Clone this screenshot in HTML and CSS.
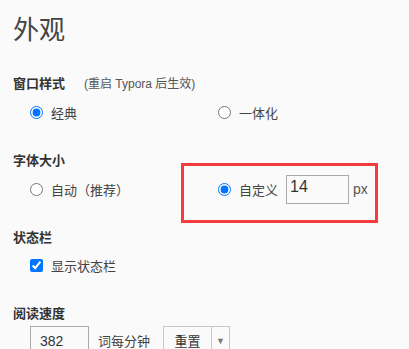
FILE: index.html
```html
<!DOCTYPE html>
<html lang="zh-CN">
<head>
<meta charset="utf-8">
<title>外观</title>
<link rel="stylesheet" href="styles.css">
</head>
<body>
<div class="page">
  <h1 class="title">外观</h1>

  <div class="label label-first">窗口样式<span class="hint">(重启 Typora 后生效)</span></div>
  <div class="options">
    <label class="opt"><input type="radio" name="win" checked><span>经典</span></label>
    <label class="opt"><input type="radio" name="win"><span>一体化</span></label>
  </div>

  <div class="label">字体大小</div>
  <div class="options">
    <label class="opt"><input type="radio" name="fs"><span>自动（推荐）</span></label>
    <div class="opt custom">
      <input type="radio" name="fs" checked><span>自定义</span>
      <input class="num" type="text" value="14"><span class="unit">px</span>
      <div class="highlight"></div>
    </div>
  </div>

  <div class="label">状态栏</div>
  <div class="options single">
    <label class="opt"><input type="checkbox" checked><span>显示状态栏</span></label>
  </div>

  <div class="label">阅读速度</div>
  <div class="speed">
    <input class="num speed-input" type="text" value="382">
    <span class="unit-text">词每分钟</span>
    <div class="split-btn">
      <span class="btn-main">重置</span>
      <span class="btn-drop">▼</span>
    </div>
  </div>
</div>
</body>
</html>
```

FILE: styles.css
```css
html, body {
  margin: 0;
  padding: 0;
  background: #fafafa;
}

body {
  font-family: "Liberation Sans", "Noto Sans CJK SC", sans-serif;
  font-size: 13px;
  color: #333;
  overflow: hidden;
  height: 349px;
}

.page {
  padding-left: 13px;
  width: 396px;
}

.title {
  margin: 0;
  height: 56px;
  line-height: 56px;
  font-size: 26px;
  font-weight: normal;
  color: #444;
  font-family: "Noto Sans CJK SC", sans-serif;
}

.label {
  height: 20px;
  line-height: 20px;
  font-weight: bold;
  margin-top: 26px;
  font-family: "Noto Sans CJK SC", sans-serif;
  color: #333;
}

.label-first {
  margin-top: 17px;
}

.hint {
  font-weight: normal;
  font-size: 12px;
  font-family: "Liberation Sans", "Noto Sans CJK SC", sans-serif;
  color: #555;
  margin-left: 19px;
}

.options {
  display: grid;
  grid-template-columns: 188px 1fr;
  height: 24px;
  margin-top: 7px;
  padding-left: 17px;
}

.options.single {
  margin-top: 6px;
  grid-template-columns: 1fr;
}

.opt {
  display: flex;
  align-items: center;
  height: 24px;
  font-family: "Noto Sans CJK SC", sans-serif;
  color: #444;
}

.opt input[type="radio"],
.opt input[type="checkbox"] {
  margin: 0 8px 0 0;
  width: 13px;
  height: 13px;
  flex: none;
}

.custom {
  position: relative;
}

.num {
  box-sizing: border-box;
  border: 1px solid #aaa;
  background: #fafafa;
  font-family: "Liberation Sans", sans-serif;
  font-size: 15px;
  color: #333;
  outline: none;
}

.custom .num {
  width: 63px;
  height: 29px;
  margin-left: 8px;
  padding: 0 4px 4px 3px;
  font-size: 16px;
}

.unit {
  margin-left: 4px;
  font-family: "Liberation Sans", sans-serif;
  font-size: 14px;
  color: #555;
}

.highlight {
  position: absolute;
  left: -37px;
  top: -14px;
  width: 197px;
  height: 60px;
  box-sizing: border-box;
  border: 3px solid #f53b3b;
  pointer-events: none;
}

.speed {
  display: flex;
  align-items: center;
  margin-top: 3px;
  padding-left: 17px;
  height: 29px;
}

.speed-input {
  width: 59px;
  height: 29px;
  padding: 0 0 0 9px;
  font-size: 14px;
}

.unit-text {
  margin-left: 9px;
  font-family: "Noto Sans CJK SC", sans-serif;
  color: #444;
  font-size: 13px;
}

.split-btn {
  display: flex;
  margin-left: 13px;
  height: 29px;
  box-sizing: border-box;
  border: 1px solid #c8c8c8;
  background: #fafafa;
}

.btn-main {
  width: 47px;
  display: flex;
  align-items: center;
  justify-content: center;
  border-right: 1px solid #c8c8c8;
  font-family: "Noto Sans CJK SC", sans-serif;
  color: #333;
}

.btn-drop {
  width: 17px;
  display: flex;
  align-items: center;
  justify-content: center;
  font-size: 9px;
  color: #777;
}
```
